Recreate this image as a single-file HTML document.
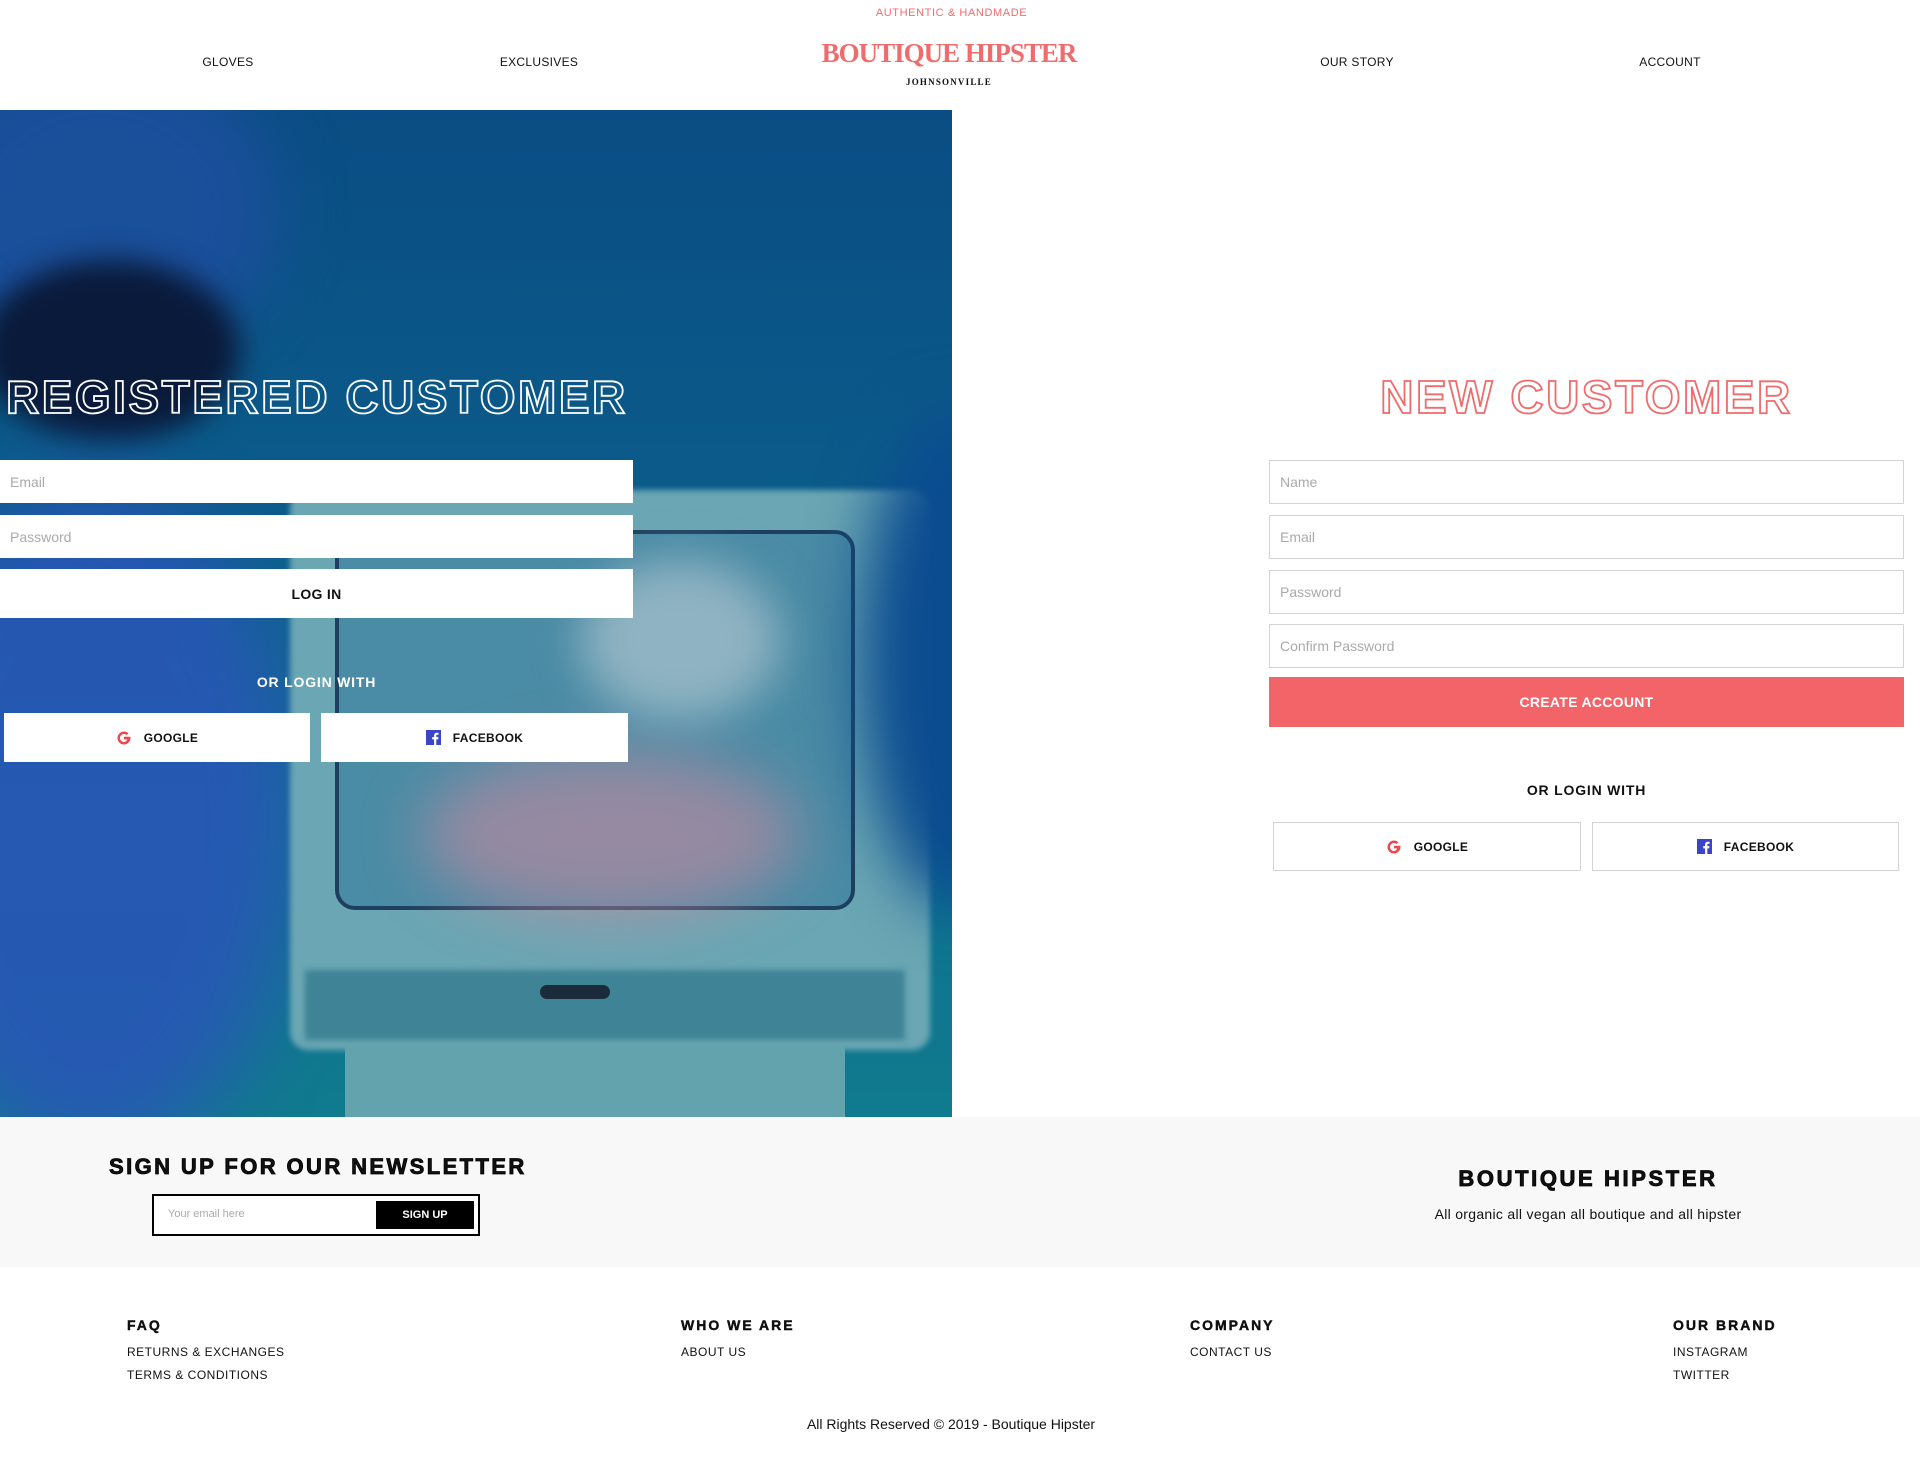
<!DOCTYPE html>
<html><head><meta charset="utf-8"><style>
*{box-sizing:border-box;margin:0;padding:0}
body{width:1920px;height:1472px;background:#fff;font-family:"Liberation Sans",sans-serif;position:relative;overflow:hidden;color:#111}
.a{position:absolute}
.nav{font-size:12px;top:55px;letter-spacing:.3px;transform:translateX(-50%)}
.ph{font-size:14px;color:#aaa;padding-left:10px;display:flex;align-items:center;background:#fff}
.bx{border:1px solid #d4d4d4}
.btn{background:#fff;display:flex;align-items:center;justify-content:center;font-weight:bold;font-size:12px;letter-spacing:.3px}
.btn svg{margin-right:12px}
.title{font-weight:bold;font-size:46px;letter-spacing:2.5px;color:transparent;-webkit-text-stroke:1.8px #fff;white-space:nowrap}
.fh{font-weight:900;font-size:14px;letter-spacing:2px;-webkit-text-stroke:.4px #000}
.fl{font-size:12px;letter-spacing:.5px}
.blob{position:absolute;border-radius:50%}
</style></head><body>
<div class="a" style="top:7px;left:0;width:1903px;text-align:center;font-size:11px;color:#f06c6c;letter-spacing:.6px">AUTHENTIC &amp; HANDMADE</div>
<div class="a nav" style="left:228px">GLOVES</div>
<div class="a nav" style="left:539px">EXCLUSIVES</div>
<div class="a nav" style="left:1357px">OUR STORY</div>
<div class="a nav" style="left:1670px">ACCOUNT</div>
<div class="a" style="top:38px;left:749px;width:400px;text-align:center;font-family:'Liberation Serif',serif;font-weight:bold;font-size:27px;color:#f06c6c;letter-spacing:-1px">BOUTIQUE HIPSTER</div>
<div class="a" style="top:77px;left:749px;width:400px;text-align:center;font-family:'Liberation Serif',serif;font-weight:bold;font-size:9px;letter-spacing:1.2px">JOHNSONVILLE</div>

<!-- hero image -->
<div class="a" style="left:0;top:110px;width:952px;height:1007px;overflow:hidden;background:linear-gradient(180deg,#0a4d84 0%,#0b5c8a 40%,#0e7290 70%,#107a8e 100%)">
  <div class="blob" style="left:-80px;top:-60px;width:360px;height:320px;background:#1a4f9a;filter:blur(30px)"></div>
  <div class="blob" style="left:-20px;top:150px;width:260px;height:180px;background:#0a1a3a;filter:blur(14px)"></div>
  <div class="blob" style="left:-120px;top:370px;width:420px;height:680px;background:#2a55b8;filter:blur(40px);opacity:.85"></div>
  <div class="a" style="left:290px;top:380px;width:640px;height:560px;background:#6aa6b3;border-radius:18px;filter:blur(3px)"></div>
  <div class="a" style="left:335px;top:420px;width:520px;height:380px;background:#4a8ba5;border-radius:20px;border:4px solid #1e3f5f"></div>
  <div class="blob" style="left:420px;top:640px;width:380px;height:170px;background:#c78aa0;filter:blur(30px);opacity:.6"></div>
  <div class="blob" style="left:580px;top:450px;width:200px;height:160px;background:#8fb3c2;filter:blur(22px)"></div>
  <div class="a" style="left:305px;top:860px;width:600px;height:70px;background:#3f8496;filter:blur(3px)"></div>
  <div class="a" style="left:540px;top:875px;width:70px;height:14px;background:#1a2c3c;border-radius:7px"></div>
  <div class="a" style="left:345px;top:935px;width:500px;height:80px;background:#63a3ae"></div>
  <div class="blob" style="left:860px;top:300px;width:200px;height:500px;background:#0b4c90;filter:blur(30px)"></div>
</div>

<div class="a title" style="left:6px;top:370px">REGISTERED CUSTOMER</div>
<div class="a ph" style="left:0;top:460px;width:633px;height:43px">Email</div>
<div class="a ph" style="left:0;top:515px;width:633px;height:43px">Password</div>
<div class="a btn" style="left:0;top:569px;width:633px;height:49px;font-size:14px">LOG IN</div>
<div class="a" style="left:0;top:674px;width:633px;text-align:center;color:#fff;font-weight:bold;font-size:14px;letter-spacing:.8px">OR LOGIN WITH</div>
<div class="a btn" style="left:4px;top:713px;width:306px;height:49px"><svg width="16" height="16" viewBox="0 0 16 16"><path d="M13.5 6.8H8v2.6h3.2c-.4 1.6-1.6 2.6-3.2 2.6a4 4 0 1 1 2.6-7l1.8-1.8A6.5 6.5 0 1 0 14.5 8c0-.4 0-.8-.1-1.2z" fill="#f0474f"/></svg>GOOGLE</div>
<div class="a btn" style="left:321px;top:713px;width:307px;height:49px"><svg width="15" height="15" viewBox="0 0 16 16"><rect width="16" height="16" fill="#3a45c8"/><path d="M11 16V10h2l.3-2.4H11V6.2c0-.7.2-1.1 1.2-1.1h1.2V3a15 15 0 0 0-1.8-.1c-1.8 0-3 1.1-3 3.1v1.6H6.6V10h2V16z" fill="#fff"/></svg>FACEBOOK</div>

<div class="a title" style="left:1269px;width:635px;text-align:center;top:370px;-webkit-text-stroke:1.8px #f06c6c">NEW CUSTOMER</div>
<div class="a ph bx" style="left:1269px;top:460px;width:635px;height:44px">Name</div>
<div class="a ph bx" style="left:1269px;top:515px;width:635px;height:44px">Email</div>
<div class="a ph bx" style="left:1269px;top:570px;width:635px;height:44px">Password</div>
<div class="a ph bx" style="left:1269px;top:624px;width:635px;height:44px">Confirm Password</div>
<div class="a btn" style="left:1269px;top:677px;width:635px;height:50px;background:#f26468;color:#fff;font-size:14px">CREATE ACCOUNT</div>
<div class="a" style="left:1269px;top:782px;width:635px;text-align:center;font-weight:bold;font-size:14px;letter-spacing:.8px">OR LOGIN WITH</div>
<div class="a btn bx" style="left:1273px;top:822px;width:308px;height:49px"><svg width="16" height="16" viewBox="0 0 16 16"><path d="M13.5 6.8H8v2.6h3.2c-.4 1.6-1.6 2.6-3.2 2.6a4 4 0 1 1 2.6-7l1.8-1.8A6.5 6.5 0 1 0 14.5 8c0-.4 0-.8-.1-1.2z" fill="#f0474f"/></svg>GOOGLE</div>
<div class="a btn bx" style="left:1592px;top:822px;width:307px;height:49px"><svg width="15" height="15" viewBox="0 0 16 16"><rect width="16" height="16" fill="#3a45c8"/><path d="M11 16V10h2l.3-2.4H11V6.2c0-.7.2-1.1 1.2-1.1h1.2V3a15 15 0 0 0-1.8-.1c-1.8 0-3 1.1-3 3.1v1.6H6.6V10h2V16z" fill="#fff"/></svg>FACEBOOK</div>

<!-- newsletter band -->
<div class="a" style="left:0;top:1117px;width:1920px;height:150px;background:#f8f8f8"></div>
<div class="a" style="left:109px;top:1154px;font-weight:900;font-size:22px;letter-spacing:2.4px;white-space:nowrap;-webkit-text-stroke:.8px #000">SIGN UP FOR OUR NEWSLETTER</div>
<div class="a" style="left:152px;top:1194px;width:328px;height:42px;border:2px solid #000;background:#fff"></div>
<div class="a" style="left:168px;top:1208px;font-size:11px;color:#aaa">Your email here</div>
<div class="a" style="left:376px;top:1201px;width:98px;height:28px;background:#000;color:#fff;font-weight:bold;font-size:11px;display:flex;align-items:center;justify-content:center">SIGN UP</div>
<div class="a" style="left:1338px;top:1166px;width:500px;text-align:center;font-weight:900;font-size:22px;letter-spacing:2.6px;-webkit-text-stroke:.8px #000">BOUTIQUE HIPSTER</div>
<div class="a" style="left:1338px;top:1206px;width:500px;text-align:center;font-size:14px;letter-spacing:.3px">All organic all vegan all boutique and all hipster</div>

<div class="a fh" style="left:127px;top:1317px">FAQ</div>
<div class="a fl" style="left:127px;top:1345px">RETURNS &amp; EXCHANGES</div>
<div class="a fl" style="left:127px;top:1368px">TERMS &amp; CONDITIONS</div>
<div class="a fh" style="left:681px;top:1317px">WHO WE ARE</div>
<div class="a fl" style="left:681px;top:1345px">ABOUT US</div>
<div class="a fh" style="left:1190px;top:1317px">COMPANY</div>
<div class="a fl" style="left:1190px;top:1345px">CONTACT US</div>
<div class="a fh" style="left:1673px;top:1317px">OUR BRAND</div>
<div class="a fl" style="left:1673px;top:1345px">INSTAGRAM</div>
<div class="a fl" style="left:1673px;top:1368px">TWITTER</div>
<div class="a" style="left:701px;top:1416px;width:500px;text-align:center;font-size:14px">All Rights Reserved © 2019 - Boutique Hipster</div>
</body></html>
